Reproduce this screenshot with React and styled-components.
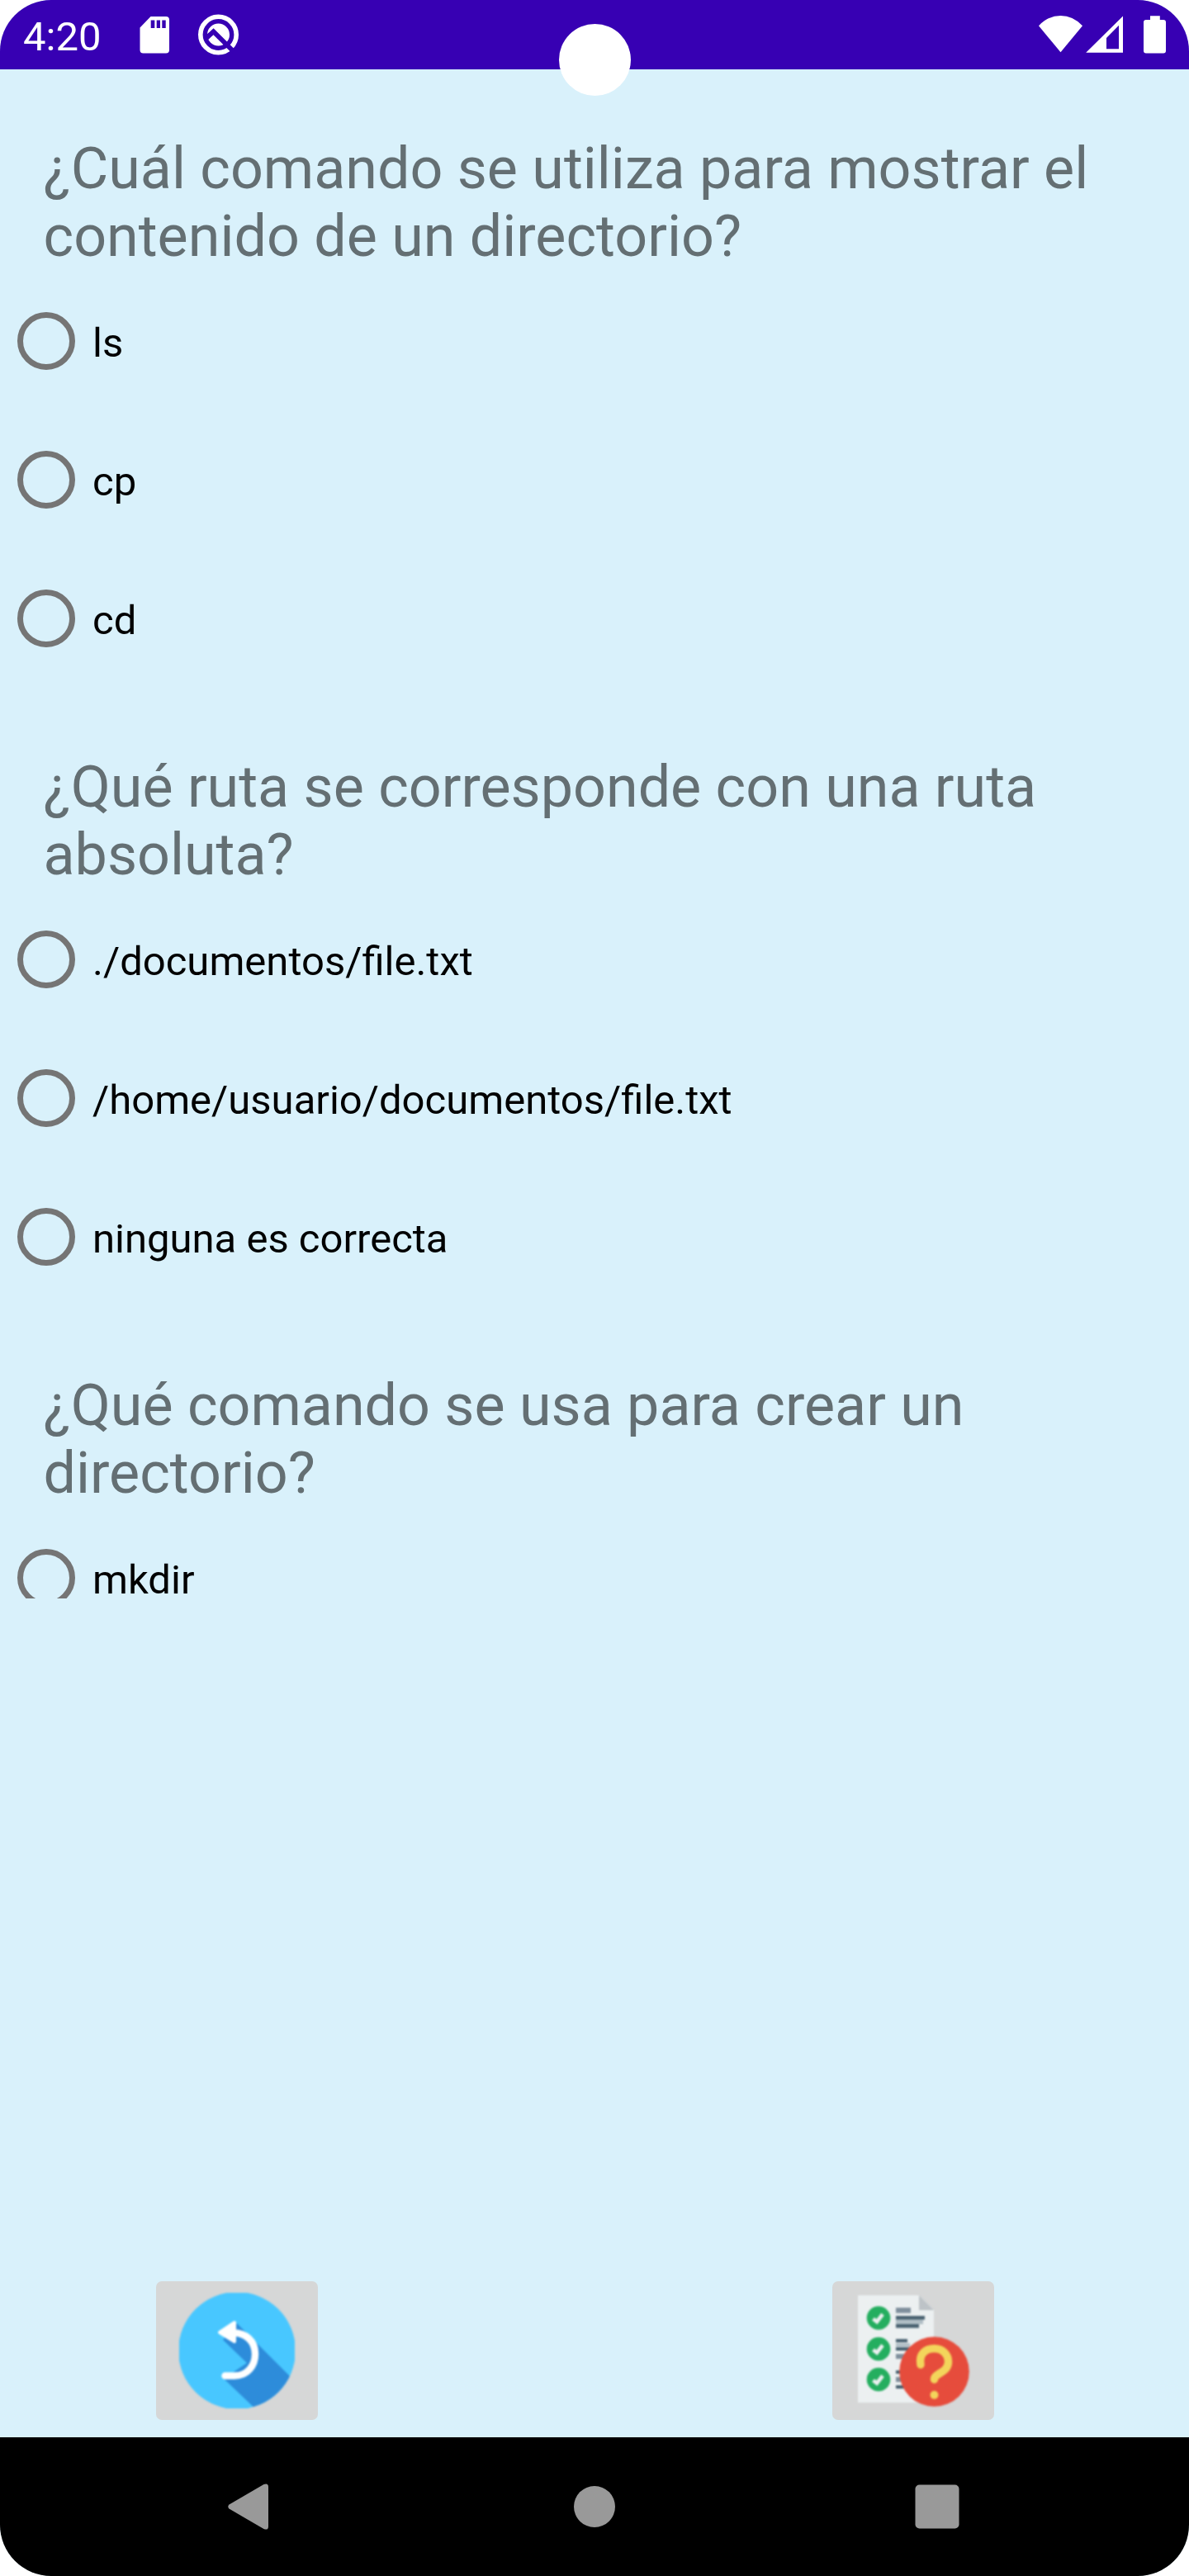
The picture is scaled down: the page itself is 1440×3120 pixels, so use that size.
import React from "react";
import styled, { createGlobalStyle } from "styled-components";

const GlobalStyle = createGlobalStyle`
  *, *::before, *::after { box-sizing: border-box; }
  html, body { margin: 0; padding: 0; background: #fff; }
  body { font-family: Roboto, "Liberation Sans", sans-serif; }
`;

const Screen = styled.div`
  position: relative;
  display: flex;
  flex-direction: column;
  width: 1440px;
  height: 3120px;
  overflow: hidden;
  border-radius: 62px;
  background: #d9f1fb;
`;

const StatusBar = styled.header`
  flex: none;
  display: flex;
  justify-content: space-between;
  height: 84px;
  background: #3700b3;
`;

const StatusGroup = styled.div`
  display: flex;
  padding: 0 0 0 28px;
`;

const Clock = styled.time`
  width: 141px;
  padding-top: 16px;
  color: #fff;
  font-size: 49px;
  line-height: 57px;
`;

const Camera = styled.div`
  position: absolute;
  top: 29px;
  left: 677px;
  width: 87px;
  height: 87px;
  border-radius: 50%;
  background: #fff;
`;

const Glyph = styled.svg`
  display: block;
  flex: none;
  width: ${(p) => p.$w}px;
  height: ${(p) => p.$h}px;
  filter: ${(p) => (p.$soft ? "blur(0.8px)" : "none")};
`;

const Quiz = styled.main`
  flex: none;
  height: 1852px;
  overflow: hidden;
`;

const Question = styled.h2`
  margin: 0;
  padding: 79px 52.5px 2px;
  color: #646f73;
  font-size: 70px;
  font-weight: 400;
  line-height: 82px;
`;

const Option = styled.label`
  display: flex;
  align-items: center;
  gap: 21px;
  height: 168px;
  padding-left: 21px;
  color: #000;
  font-size: 49px;
  line-height: 57px;
`;

const Radio = styled.span`
  width: 70px;
  height: 70px;
  border: 7px solid #757575;
  border-radius: 50%;
`;

const OptionText = styled.span`
  padding-top: 5px;
`;

const Actions = styled.div`
  display: flex;
  justify-content: space-between;
  margin-top: auto;
  padding: 0 236px 21px 189px;
`;

const ActionButton = styled.button`
  display: flex;
  align-items: center;
  justify-content: center;
  width: 196px;
  height: 168px;
  padding: 0;
  border: 0;
  border-radius: 7px;
  background: #d6d7d7;
`;

const NavBar = styled.nav`
  flex: none;
  display: grid;
  grid-template-columns: 50px 52px 54px;
  align-items: center;
  column-gap: 0;
  height: 168px;
  padding: 0 278px 0 276px;
  grid-template-columns: 418px 414px 54px;
  background: #000;
`;

const QUESTIONS = [
  {
    text: ["¿Cuál comando se utiliza para mostrar el", "contenido de un directorio?"],
    options: ["ls", "cp", "cd"],
  },
  {
    text: ["¿Qué ruta se corresponde con una ruta", "absoluta?"],
    options: ["./documentos/file.txt", "/home/usuario/documentos/file.txt", "ninguna es correcta"],
  },
  {
    text: ["¿Qué comando se usa para crear un", "directorio?"],
    options: ["mkdir"],
  },
];

const StatusLeftIcons = () => (
  <Glyph $w={130} $h={84} viewBox="169 0 130 84">
    <path
      fill="#fff"
      fillRule="evenodd"
      d="M182.500 20H201a4 4 0 0 1 4 4V60.500a4 4 0 0 1-4 4H173.500a4 4 0 0 1-4-4V33.500ZM182.700 24.500V34H187.300V24.500ZM189.700 24.500V34H194V24.500ZM196.300 24.500V34H200.700V24.500Z"
    />
    <circle cx="264.500" cy="42" r="21.700" fill="none" stroke="#fff" strokeWidth="5.600" />
    <circle cx="264.500" cy="42" r="13.500" fill="#fff" />
    <path d="M250 46L258.500 38.300L283 62.500" fill="none" stroke="#3700b3" strokeWidth="5.800" />
  </Glyph>
);

const StatusRightIcons = () => (
  <Glyph $w={190} $h={84} viewBox="1250 0 190 84">
    <path fill="#fff" d="M1258 31.200Q1269.500 19 1284.500 19T1311 31.200L1284.500 63.300Z" />
    <path
      fill="#fff"
      fillRule="evenodd"
      d="M1360 19.500V63.700H1315.200ZM1355 30.700L1340 46V59.200H1355Z"
    />
    <path
      fill="#fff"
      d="M1393 19.300H1404.800V24H1409a3 3 0 0 1 3 3V61.500a3 3 0 0 1-3 3H1388a3 3 0 0 1-3-3V27a3 3 0 0 1 3-3H1393Z"
    />
  </Glyph>
);

const BackArt = () => (
  <Glyph $w={140} $h={140} $soft viewBox="0 0 140 140">
    <defs>
      <clipPath id="disc"><circle cx="70" cy="70" r="71" /></clipPath>
    </defs>
    <g clipPath="url(#disc)">
      <rect width="140" height="140" fill="#48c7ff" />
      <path fill="#2d8cda" d="M70 37L145 112V145H97L54 104L82 85L53 57Z" />
    </g>
    <path d="M55.500 100.500H67C83 100.500 92 88 92 74C92 58 80 48.500 66 48.500" fill="none" stroke="#fff" strokeWidth="8.500" strokeLinecap="round" />
    <path d="M49 48L67 36V59Z" fill="#fff" stroke="#fff" strokeWidth="4" strokeLinejoin="round" />
  </Glyph>
);

const CHECK_ROWS = [30.5, 68, 105];

const QuizArt = () => (
  <Glyph $w={140} $h={140} $soft viewBox="0 0 140 140">
    <path fill="#ecf0f1" d="M3 3H77L95 21V133H3Z" />
    <path fill="#bdc3c7" d="M77 3L95 21H77Z" />
    {CHECK_ROWS.map((y) => (
      <g key={y}>
        <circle cx="28" cy={y} r="14.300" fill="#24ae5f" />
        <path d={`M21.500 ${y + 1}l4.500 3.500l7-9`} fill="none" stroke="#ecf0f1" strokeWidth="4.500" />
      </g>
    ))}
    <path fill="#7f8f9c" d="M49 18H67V24.500H49ZM49 74H62V80H49ZM49 102H60V108H49Z" />
    <path fill="#b0bec5" d="M49 32.500H82V38H49ZM49 61H66V65.500H49Z" />
    <path fill="#47606f" d="M49 28H84V32.500H49ZM49 38H77V42.500H49ZM49 56H63V60H49ZM49 66H66V70H49ZM49 94H60V98H49ZM49 112H62V116H49Z" />
    <circle cx="95.500" cy="95.500" r="42.300" fill="#e64c3c" />
    <path d="M79 87C76.500 74 85 67.500 95.500 67.500C106 67.500 112.500 75 112.500 83.500C112.500 97 95.500 97 95.500 105" fill="none" stroke="#f3d55b" strokeWidth="9.500" strokeLinecap="round" />
    <circle cx="95.500" cy="123.700" r="5" fill="#f3d55b" />
  </Glyph>
);

export default function App() {
  return (
    <>
      <GlobalStyle />
      <Screen>
        <StatusBar>
          <StatusGroup>
            <Clock>4:20</Clock>
            <StatusLeftIcons />
          </StatusGroup>
          <StatusRightIcons />
        </StatusBar>
        <Camera />
        <Quiz>
          {QUESTIONS.map((q) => (
            <section key={q.text[0]}>
              <Question>
                {q.text[0]}
                <br />
                {q.text[1]}
              </Question>
              {q.options.map((o) => (
                <Option key={o}>
                  <Radio />
                  <OptionText>{o}</OptionText>
                </Option>
              ))}
            </section>
          ))}
        </Quiz>
        <Actions>
          <ActionButton aria-label="Volver"><BackArt /></ActionButton>
          <ActionButton aria-label="Corregir"><QuizArt /></ActionButton>
        </Actions>
        <NavBar>
          <Glyph $w={50} $h={56} viewBox="0 0 50 56">
            <path fill="#999" d="M1.500 25.500L43.500 0.900Q49 -1 49 4V52Q49 57 43.500 55.100L1.500 30.500Q-1 28 1.500 25.500Z" />
          </Glyph>
          <Glyph $w={52} $h={52} viewBox="0 0 52 52">
            <circle cx="26" cy="26" r="25" fill="#999" />
          </Glyph>
          <Glyph $w={54} $h={54} viewBox="0 0 54 54">
            <rect x="0.500" y="0.500" width="53" height="53" rx="5" fill="#999" />
          </Glyph>
        </NavBar>
      </Screen>
    </>
  );
}
